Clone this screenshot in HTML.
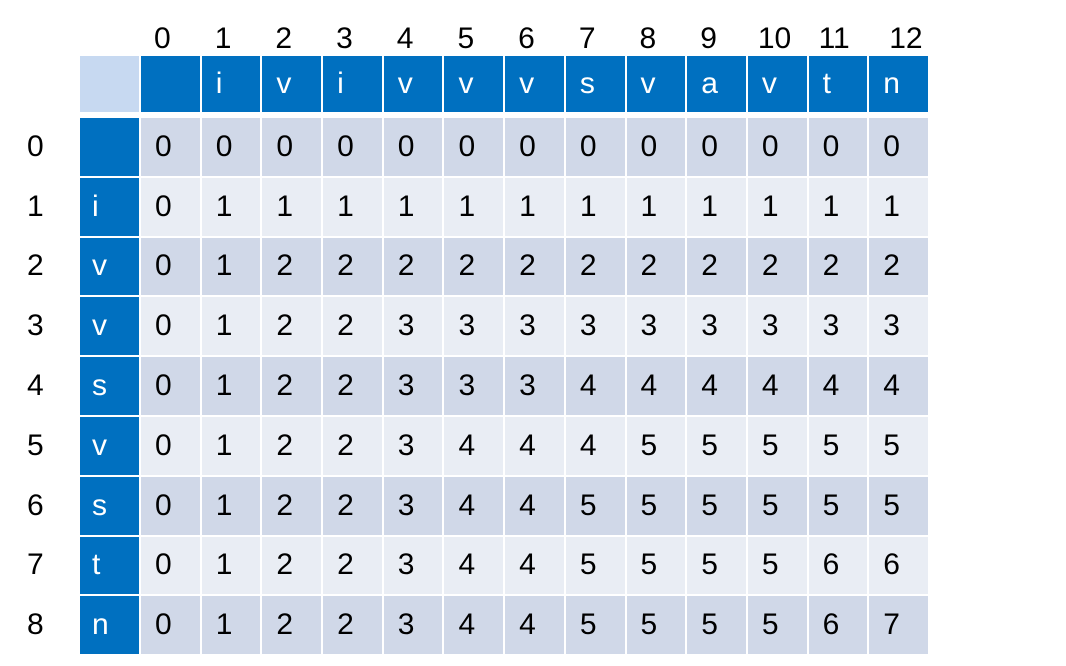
<!DOCTYPE html>
<html><head><meta charset="utf-8"><style>
body{margin:0;background:#fff;width:1066px;height:666px;overflow:hidden;font-family:"Liberation Sans",sans-serif;}
table{position:absolute;left:0;top:21px;border-collapse:separate;border-spacing:2px;table-layout:fixed;font-size:30px;}
td{padding:0 0 0 14px;text-align:left;vertical-align:middle;box-sizing:border-box;white-space:nowrap;overflow:visible;line-height:1}
td.r{padding-left:25px;color:#000}
tr.top td{height:31px;color:#000;padding-left:13px}
tr.h td{height:56px;background:#0070C0;color:#fff}
tr.h td.c{background:#C7D9F1}
tr.h td.r,tr.top td.r{background:transparent}
tr.sp td{height:2px;background:transparent}
tr.b td{height:57.8px;color:#000}
tr.d td{background:#D0D8E8}
tr.l td{background:#E9EDF4}
tr.b td.lab{background:#0070C0;color:#fff;padding-left:12px}
tr.b td.r{background:transparent}
</style></head><body>
<table>
<colgroup><col style="width:76px"><col style="width:59px"><col span="13" style="width:58.7px"></colgroup>
<tr class="top"><td class="r"></td><td></td><td>0</td><td>1</td><td>2</td><td>3</td><td>4</td><td>5</td><td>6</td><td>7</td><td>8</td><td>9</td><td style="padding-left:10px">10</td><td style="padding-left:10px">11</td><td style="padding-left:20px">12</td></tr>
<tr class="h"><td class="r"></td><td class="c"></td><td></td><td>i</td><td>v</td><td>i</td><td>v</td><td>v</td><td>v</td><td>s</td><td>v</td><td>a</td><td>v</td><td>t</td><td>n</td></tr>
<tr class="sp"><td></td><td></td><td></td><td></td><td></td><td></td><td></td><td></td><td></td><td></td><td></td><td></td><td></td><td></td><td></td></tr>
<tr class="b d"><td class="r">0</td><td class="lab"></td><td>0</td><td>0</td><td>0</td><td>0</td><td>0</td><td>0</td><td>0</td><td>0</td><td>0</td><td>0</td><td>0</td><td>0</td><td>0</td></tr>
<tr class="b l"><td class="r">1</td><td class="lab">i</td><td>0</td><td>1</td><td>1</td><td>1</td><td>1</td><td>1</td><td>1</td><td>1</td><td>1</td><td>1</td><td>1</td><td>1</td><td>1</td></tr>
<tr class="b d"><td class="r">2</td><td class="lab">v</td><td>0</td><td>1</td><td>2</td><td>2</td><td>2</td><td>2</td><td>2</td><td>2</td><td>2</td><td>2</td><td>2</td><td>2</td><td>2</td></tr>
<tr class="b l"><td class="r">3</td><td class="lab">v</td><td>0</td><td>1</td><td>2</td><td>2</td><td>3</td><td>3</td><td>3</td><td>3</td><td>3</td><td>3</td><td>3</td><td>3</td><td>3</td></tr>
<tr class="b d"><td class="r">4</td><td class="lab">s</td><td>0</td><td>1</td><td>2</td><td>2</td><td>3</td><td>3</td><td>3</td><td>4</td><td>4</td><td>4</td><td>4</td><td>4</td><td>4</td></tr>
<tr class="b l"><td class="r">5</td><td class="lab">v</td><td>0</td><td>1</td><td>2</td><td>2</td><td>3</td><td>4</td><td>4</td><td>4</td><td>5</td><td>5</td><td>5</td><td>5</td><td>5</td></tr>
<tr class="b d"><td class="r">6</td><td class="lab">s</td><td>0</td><td>1</td><td>2</td><td>2</td><td>3</td><td>4</td><td>4</td><td>5</td><td>5</td><td>5</td><td>5</td><td>5</td><td>5</td></tr>
<tr class="b l"><td class="r">7</td><td class="lab">t</td><td>0</td><td>1</td><td>2</td><td>2</td><td>3</td><td>4</td><td>4</td><td>5</td><td>5</td><td>5</td><td>5</td><td>6</td><td>6</td></tr>
<tr class="b d"><td class="r">8</td><td class="lab">n</td><td>0</td><td>1</td><td>2</td><td>2</td><td>3</td><td>4</td><td>4</td><td>5</td><td>5</td><td>5</td><td>5</td><td>6</td><td>7</td></tr>
</table>
</body></html>
